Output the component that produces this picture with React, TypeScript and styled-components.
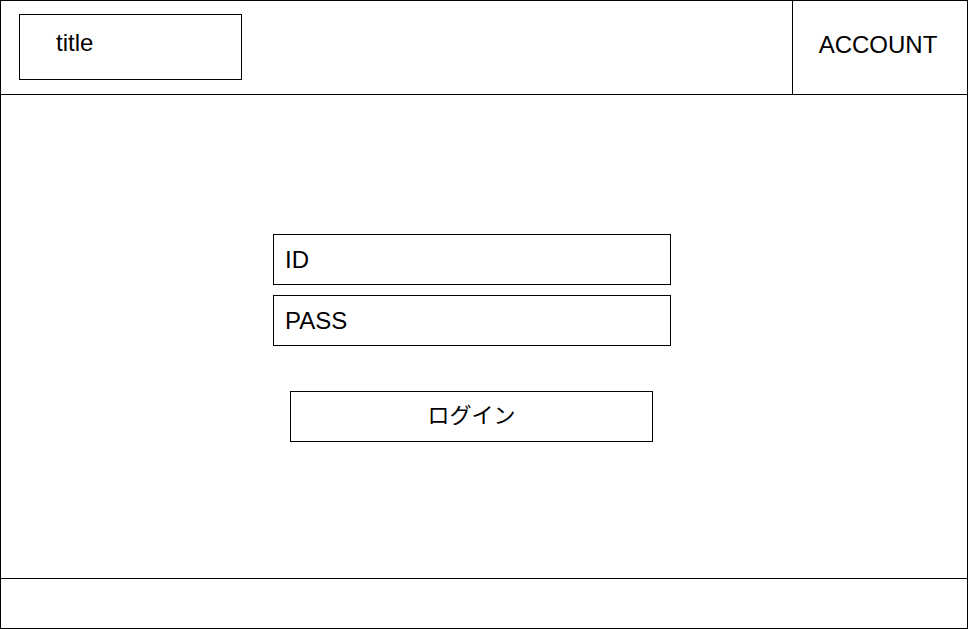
import { ReactElement } from 'react'
import styled, { createGlobalStyle } from 'styled-components'

const GlobalStyle = createGlobalStyle`
  * {
    box-sizing: border-box;
  }
  body {
    margin: 0;
    background: #fff;
    font-family: 'Liberation Sans', Arial, 'Noto Sans CJK JP', sans-serif;
    color: #000;
  }
`

const Frame = styled.div`
  width: 968px;
  height: 629px;
  border: 1px solid #000;
  display: flex;
  flex-direction: column;
`

const Header = styled.header`
  height: 94px;
  display: flex;
  border-bottom: 1px solid #000;
`

const Brand = styled.div`
  flex: 1;
  padding: 13px 18px;
`

const TitleBox = styled.div`
  width: 223px;
  height: 66px;
  border: 1px solid #000;
  padding: 14px 0 0 36px;
  font-size: 24px;
`

const Account = styled.div`
  width: 175px;
  border-left: 1px solid #000;
  display: flex;
  align-items: center;
  justify-content: center;
  font-size: 24px;
  padding: 0 4px 5px 0;
`

const Main = styled.main`
  flex: 1;
  padding: 139px 0 0 272px;
  display: flex;
  flex-direction: column;
  align-items: flex-start;
`

const Field = styled.div`
  width: 398px;
  height: 51px;
  border: 1px solid #000;
  display: flex;
  align-items: center;
  padding: 1px 0 0 11px;
  font-size: 24px;
  & + & {
    margin-top: 10px;
  }
`

const LoginButton = styled.div`
  width: 363px;
  height: 51px;
  margin: 45px 0 0 17px;
  border: 1px solid #000;
  display: flex;
  align-items: center;
  justify-content: center;
  padding-bottom: 7px;
  font-size: 22px;
  line-height: 1;
  font-family: 'Noto Sans CJK JP', sans-serif;
`

const Footer = styled.footer`
  height: 50px;
  border-top: 1px solid #000;
`

export default function App(): ReactElement {
  return (
    <>
      <GlobalStyle />
      <Frame>
        <Header>
          <Brand>
            <TitleBox>title</TitleBox>
          </Brand>
          <Account>ACCOUNT</Account>
        </Header>
        <Main>
          <Field>ID</Field>
          <Field>PASS</Field>
          <LoginButton>ログイン</LoginButton>
        </Main>
        <Footer />
      </Frame>
    </>
  )
}
